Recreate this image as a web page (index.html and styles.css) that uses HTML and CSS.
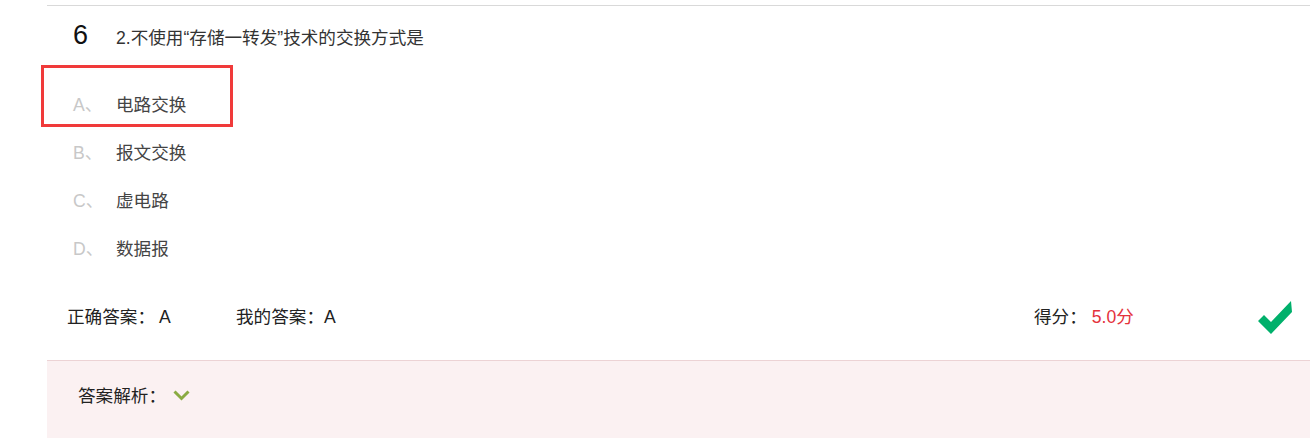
FILE: index.html
```html
<!DOCTYPE html>
<html lang="zh-CN">
<head>
<meta charset="utf-8">
<title>题目</title>
<link rel="stylesheet" href="styles.css">
</head>
<body>
<div class="wrap">
  <div class="q-head">
    <span class="q-num">6</span>
    <span class="q-title">2.不使用“存储一转发”技术的交换方式是</span>
  </div>
  <ul class="options">
    <li class="opt"><span class="opt-key">A、</span><span class="opt-text">电路交换</span></li>
    <li class="opt"><span class="opt-key">B、</span><span class="opt-text">报文交换</span></li>
    <li class="opt"><span class="opt-key">C、</span><span class="opt-text">虚电路</span></li>
    <li class="opt"><span class="opt-key">D、</span><span class="opt-text">数据报</span></li>
    <li class="mark-box" aria-hidden="true"></li>
  </ul>
  <div class="answer-row">
    <span class="ans ans-right">正确答案：<b class="ans-val">A</b></span>
    <span class="ans ans-mine">我的答案：<b class="ans-val2">A</b></span>
    <span class="score">得分：<em class="score-val">5.0分</em></span>
    <svg class="check" width="34" height="34" viewBox="0 0 34 34" aria-hidden="true">
      <polygon points="0,21 6,15 13,22 33,1 34,12 13,34" fill="#00b06b"/>
    </svg>
  </div>
  <div class="analysis">
    <span class="analysis-label">答案解析：</span>
    <svg class="chev" width="17" height="11" viewBox="0 0 17 11" aria-hidden="true">
      <polyline points="1.5,1.5 8.5,8.5 15.5,1.5" fill="none" stroke="#8aab42" stroke-width="3"/>
    </svg>
  </div>
</div>
</body>
</html>
```
FILE: styles.css
```css
html, body {
  margin: 0;
  padding: 0;
  background: #fff;
}
body {
  font-family: "Liberation Sans", "Noto Sans CJK SC", sans-serif;
  color: #333;
  font-size: 17.6px;
}
.wrap {
  margin: 5px 0 0 47px;
  width: 1263px;
  border-top: 1px solid #d9d9d9;
}
.q-head {
  height: 73px;
  display: flex;
  align-items: baseline;
  padding: 14px 0 0 26px;
  box-sizing: border-box;
}
.q-num {
  width: 43px;
  font-size: 27px;
  color: #111;
}
.q-title {
  color: #333;
}
.options {
  list-style: none;
  margin: 0;
  padding: 0;
  position: relative;
}
.opt {
  height: 48px;
  display: flex;
  align-items: center;
  padding-left: 26px;
}
.opt-key {
  width: 43px;
  color: #c8c8c8;
}
.opt-text {
  color: #444;
}
.mark-box {
  position: absolute;
  left: -6px;
  top: -14px;
  width: 192px;
  height: 62px;
  box-sizing: border-box;
  border: 3px solid #f03a3a;
}
.answer-row {
  display: flex;
  align-items: center;
  height: 89px;
  padding-left: 20px;
  box-sizing: border-box;
  color: #222;
}
.ans {
  display: block;
}
.ans-right {
  width: 169px;
}
.ans-val {
  font-weight: normal;
  margin-left: 4px;
}
.ans-val2 {
  font-weight: normal;
}
.score {
  margin-left: auto;
  width: 224px;
}
.score-val {
  font-style: normal;
  color: #e4323c;
  margin-left: 5px;
}
.check {
  margin-right: 18px;
  margin-top: 2px;
}
.analysis {
  height: 78px;
  box-sizing: border-box;
  background: #fbf1f2;
  border-top: 1px solid #ecd3d5;
  display: flex;
  align-items: center;
  padding: 0 0 10px 31px;
  color: #222;
}
.chev {
  margin-left: 7px;
  margin-top: 2px;
}
```
